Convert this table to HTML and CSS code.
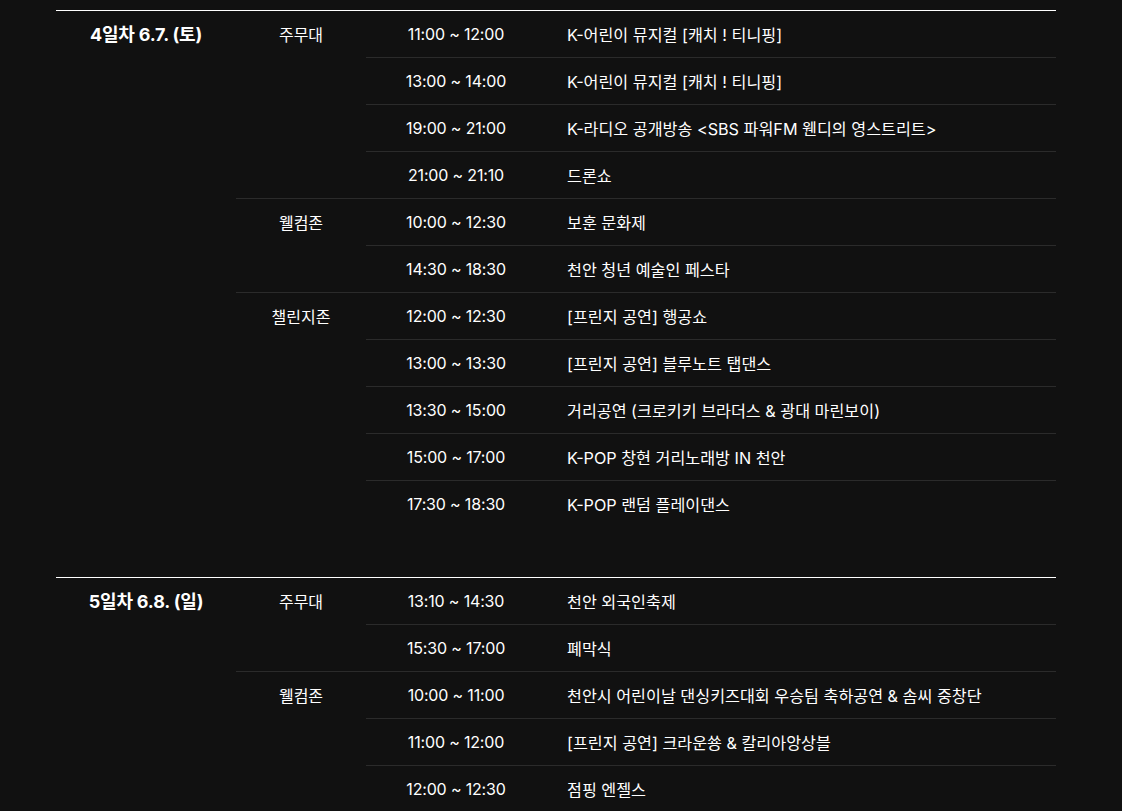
FILE: index.html
```html
<!DOCTYPE html>
<html lang="ko">
<head>
<meta charset="utf-8">
<link rel="stylesheet" href="styles.css">
</head>
<body>
<div class="schedule">
  <section class="day">
    <div class="day-label">4일차 6.7. (토)</div>
    <div class="stages">
      <div class="stage">
        <div class="stage-name">주무대</div>
        <div class="rows">
          <div class="row"><div class="time">11:00 ~ 12:00</div><div class="title">K-어린이 뮤지컬 [캐치 ! 티니핑]</div></div>
          <div class="row"><div class="time">13:00 ~ 14:00</div><div class="title">K-어린이 뮤지컬 [캐치 ! 티니핑]</div></div>
          <div class="row"><div class="time">19:00 ~ 21:00</div><div class="title">K-라디오 공개방송 &lt;SBS 파워FM 웬디의 영스트리트&gt;</div></div>
          <div class="row"><div class="time">21:00 ~ 21:10</div><div class="title">드론쇼</div></div>
        </div>
      </div>
      <div class="stage">
        <div class="stage-name">웰컴존</div>
        <div class="rows">
          <div class="row"><div class="time">10:00 ~ 12:30</div><div class="title">보훈 문화제</div></div>
          <div class="row"><div class="time">14:30 ~ 18:30</div><div class="title">천안 청년 예술인 페스타</div></div>
        </div>
      </div>
      <div class="stage">
        <div class="stage-name">챌린지존</div>
        <div class="rows">
          <div class="row"><div class="time">12:00 ~ 12:30</div><div class="title">[프린지 공연] 행공쇼</div></div>
          <div class="row"><div class="time">13:00 ~ 13:30</div><div class="title">[프린지 공연] 블루노트 탭댄스</div></div>
          <div class="row"><div class="time">13:30 ~ 15:00</div><div class="title">거리공연 (크로키키 브라더스 &amp; 광대 마린보이)</div></div>
          <div class="row"><div class="time">15:00 ~ 17:00</div><div class="title">K-POP 창현 거리노래방 IN 천안</div></div>
          <div class="row"><div class="time">17:30 ~ 18:30</div><div class="title">K-POP 랜덤 플레이댄스</div></div>
        </div>
      </div>
    </div>
  </section>
  <section class="day">
    <div class="day-label">5일차 6.8. (일)</div>
    <div class="stages">
      <div class="stage">
        <div class="stage-name">주무대</div>
        <div class="rows">
          <div class="row"><div class="time">13:10 ~ 14:30</div><div class="title">천안 외국인축제</div></div>
          <div class="row"><div class="time">15:30 ~ 17:00</div><div class="title">폐막식</div></div>
        </div>
      </div>
      <div class="stage">
        <div class="stage-name">웰컴존</div>
        <div class="rows">
          <div class="row"><div class="time">10:00 ~ 11:00</div><div class="title">천안시 어린이날 댄싱키즈대회 우승팀 축하공연 &amp; 솜씨 중창단</div></div>
          <div class="row"><div class="time">11:00 ~ 12:00</div><div class="title">[프린지 공연] 크라운쑝 &amp; 칼리아앙상블</div></div>
          <div class="row"><div class="time">12:00 ~ 12:30</div><div class="title">점핑 엔젤스</div></div>
        </div>
      </div>
    </div>
  </section>
</div>
</body>
</html>
```

FILE: styles.css
```css
html, body {
  margin: 0;
  padding: 0;
  background: #111111;
  color: #ffffff;
  font-family: "Inter", "Noto Sans CJK KR", sans-serif;
}
.schedule {
  width: 1000px;
  margin: 0 0 0 56px;
  padding-top: 10px;
}
.day {
  display: flex;
  border-top: 1px solid #ffffff;
  padding-bottom: 50px;
}
.day-label {
  width: 180px;
  flex: none;
  text-align: center;
  font-size: 18px;
  font-weight: 700;
  letter-spacing: -0.01em;
  line-height: 48px;
}
.stages {
  flex: 1;
}
.stage {
  display: flex;
}
.stage + .stage {
  border-top: 1px solid #2b2b2b;
}
.stage-name {
  width: 130px;
  flex: none;
  text-align: center;
  font-size: 16px;
  line-height: 48px;
}
.rows {
  flex: 1;
}
.row {
  display: flex;
  box-sizing: border-box;
  height: 46px;
  align-items: center;
  font-size: 16px;
}
.row + .row {
  height: 47px;
  border-top: 1px solid #2b2b2b;
}
.time {
  width: 180px;
  flex: none;
  text-align: center;
  letter-spacing: -0.01em;
}
.title {
  padding-left: 21px;
  font-size: 16.2px;
}
```
